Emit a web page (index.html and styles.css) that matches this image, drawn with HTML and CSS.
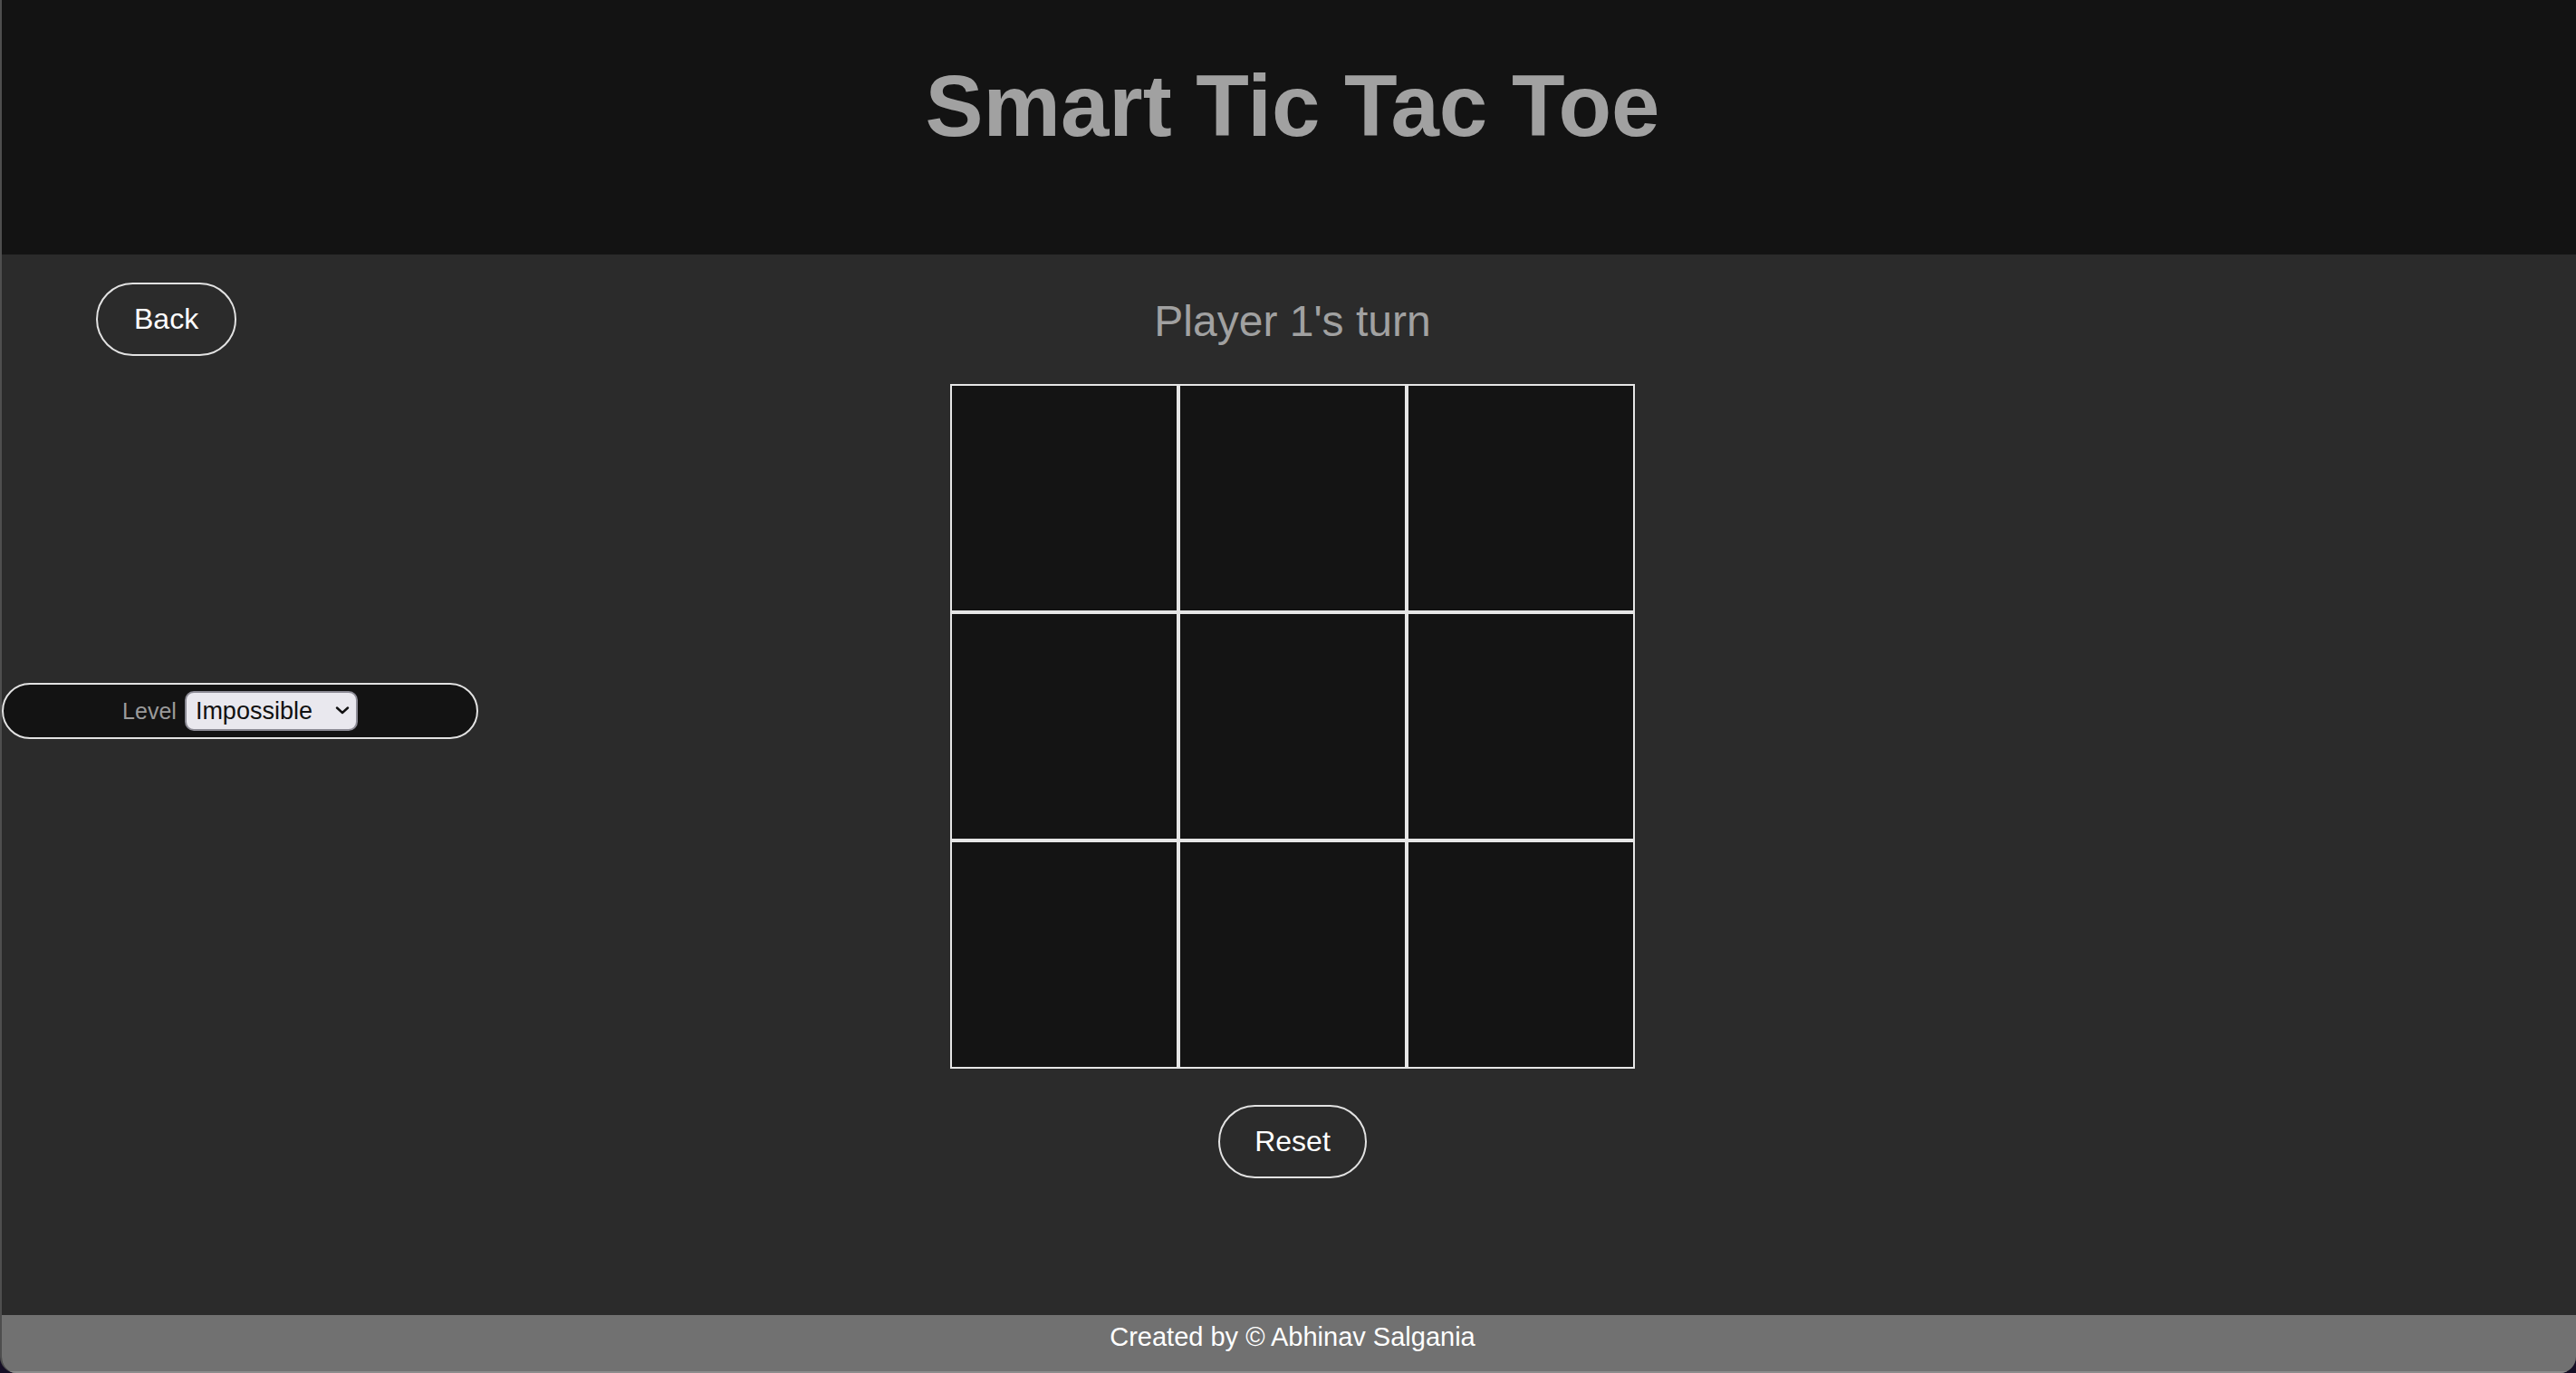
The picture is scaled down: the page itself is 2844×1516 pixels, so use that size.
FILE: index.html
```html
<!DOCTYPE html>
<html lang="en">
<head>
<meta charset="utf-8">
<title>Smart Tic Tac Toe</title>
<link rel="stylesheet" href="styles.css">
</head>
<body>
<div class="app">
  <header class="top">
    <h1 class="title">Smart Tic Tac Toe</h1>
  </header>
  <main class="game">
    <aside class="side">
      <button class="pill-btn back-btn" type="button">Back</button>
      <div class="level">
        <label class="level-label" for="level">Level</label>
        <span class="select-wrap">
          <select id="level" class="level-select">
            <option>Impossible</option>
            <option>Hard</option>
            <option>Medium</option>
            <option>Easy</option>
          </select>
          <svg class="chevron" width="16" height="9" viewBox="0 0 16 9" aria-hidden="true">
            <path d="M2 1.5 L8 7 L14 1.5" fill="none" stroke="#111" stroke-width="2.4" stroke-linecap="round" stroke-linejoin="round"/>
          </svg>
        </span>
      </div>
    </aside>
    <section class="center">
      <h2 class="turn">Player 1's turn</h2>
      <div class="board">
        <div class="cell"></div>
        <div class="cell"></div>
        <div class="cell"></div>
        <div class="cell"></div>
        <div class="cell"></div>
        <div class="cell"></div>
        <div class="cell"></div>
        <div class="cell"></div>
        <div class="cell"></div>
      </div>
      <button class="pill-btn reset-btn" type="button">Reset</button>
    </section>
    <div class="side-right"></div>
  </main>
  <footer class="foot">Created by © Abhinav Salgania</footer>
</div>
</body>
</html>
```
FILE: styles.css
```css
html {
  background: #160f26;
}
body {
  margin: 0;
  font-family: "Liberation Sans", Arial, Helvetica, sans-serif;
}
.app {
  height: 1516px;
  box-sizing: border-box;
  display: flex;
  flex-direction: column;
  border-left: 2px solid #4e4e4e;
  border-radius: 0 0 18px 18px;
  overflow: hidden;
  background: #2b2b2b;
}
.top {
  height: 281px;
  box-sizing: border-box;
  padding: 69px 0 0 8px;
  background: #131313;
  flex: none;
}
.title {
  margin: 0;
  text-align: center;
  font-size: 96px;
  line-height: 1;
  font-weight: 700;
  color: #a1a1a1;
}
.game {
  flex: 1;
  display: grid;
  grid-template-columns: 1fr auto 1fr;
  background: #2b2b2b;
}
.side {
  display: flex;
  flex-direction: column;
  align-items: flex-start;
}
.pill-btn {
  font-family: "Liberation Sans", Arial, Helvetica, sans-serif;
  font-size: 32px;
  line-height: 37px;
  color: #ffffff;
  background: transparent;
  border: 2px solid #e2e2e2;
  border-radius: 41px;
  padding: 20px 38px;
  cursor: pointer;
}
.back-btn {
  margin: 31px 0 0 104px;
  padding: 20px 40px;
}
.level {
  margin-top: 361px;
  width: 526px;
  height: 62px;
  box-sizing: border-box;
  border: 2px solid #e2e2e2;
  border-radius: 31px;
  background: #131313;
  display: flex;
  align-items: center;
  justify-content: center;
  gap: 9px;
}
.level-label {
  font-size: 25px;
  color: #9b9b9b;
}
.select-wrap {
  position: relative;
  display: inline-flex;
}
.level-select {
  appearance: none;
  -webkit-appearance: none;
  width: 191px;
  height: 44px;
  box-sizing: border-box;
  border: 2px solid #8c8b95;
  border-radius: 10px;
  background: #e9e8ee;
  color: #111111;
  font-family: "Liberation Sans", Arial, Helvetica, sans-serif;
  font-size: 27px;
  padding: 0 0 0 10px;
}
.chevron {
  position: absolute;
  left: 166px;
  top: 17px;
  pointer-events: none;
}
.center {
  display: flex;
  flex-direction: column;
  align-items: center;
  padding-left: 8px;
}
.turn {
  margin: 50px 0 0;
  font-size: 48px;
  line-height: 1;
  font-weight: 400;
  color: #a1a1a1;
}
.board {
  margin-top: 45px;
  display: grid;
  grid-template-columns: repeat(3, 252px);
  grid-template-rows: repeat(3, 252px);
}
.cell {
  box-sizing: border-box;
  border: 2px solid #e6e6e6;
  background: #141414;
}
.reset-btn {
  margin-top: 40px;
}
.foot {
  flex: none;
  height: 64px;
  box-sizing: border-box;
  padding: 10px 0 0 8px;
  background: #717171;
  border-bottom: 2px solid #8c8c8c;
  color: #ffffff;
  font-size: 29px;
  line-height: 1;
  text-align: center;
}
```
